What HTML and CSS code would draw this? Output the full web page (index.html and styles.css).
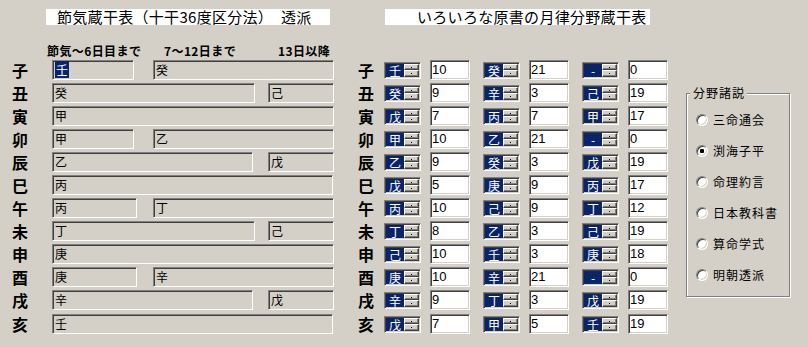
FILE: index.html
```html
<!DOCTYPE html>
<html lang="ja">
<head>
<meta charset="utf-8">
<title>月律分野蔵干表</title>
<link rel="stylesheet" href="styles.css">
</head>
<body>
<div class="app">
  <section class="left">
    <div class="title title-left">節気蔵干表（十干36度区分法）　透派</div>
    <div class="heads">
      <span class="h1">節気～6日目まで</span>
      <span class="h2">7～12日まで</span>
      <span class="h3">13日以降</span>
    </div>
    <div class="rows">
      <div class="row"><span class="br">子</span><div class="fields"><div class="fld w82"><span class="sel">壬</span></div><div class="fld w181">癸</div></div></div>
      <div class="row"><span class="br">丑</span><div class="fields"><div class="fld w203">癸</div><div class="fld w66">己</div></div></div>
      <div class="row"><span class="br">寅</span><div class="fields"><div class="fld w282">甲</div></div></div>
      <div class="row"><span class="br">卯</span><div class="fields"><div class="fld w82">甲</div><div class="fld w181">乙</div></div></div>
      <div class="row"><span class="br">辰</span><div class="fields"><div class="fld w201">乙</div><div class="fld w66">戊</div></div></div>
      <div class="row"><span class="br">巳</span><div class="fields"><div class="fld w281">丙</div></div></div>
      <div class="row"><span class="br">午</span><div class="fields"><div class="fld w85">丙</div><div class="fld w181">丁</div></div></div>
      <div class="row"><span class="br">未</span><div class="fields"><div class="fld w203">丁</div><div class="fld w66">己</div></div></div>
      <div class="row"><span class="br">申</span><div class="fields"><div class="fld w282">庚</div></div></div>
      <div class="row"><span class="br">酉</span><div class="fields"><div class="fld w85">庚</div><div class="fld w181">辛</div></div></div>
      <div class="row"><span class="br">戌</span><div class="fields"><div class="fld w201">辛</div><div class="fld w66">戊</div></div></div>
      <div class="row last"><span class="br">亥</span><div class="fields"><div class="fld w281">壬</div></div></div>
    </div>
  </section>

  <section class="mid">
    <div class="title title-right">いろいろな原書の月律分野蔵干表</div>
    <div class="rows">
      <div class="row"><span class="br">子</span>
        <div class="cell"><div class="spin"><span class="sv">壬</span><span class="btns"><i></i><i></i></span></div><div class="num">10</div></div>
        <div class="cell"><div class="spin"><span class="sv">癸</span><span class="btns"><i></i><i></i></span></div><div class="num">21</div></div>
        <div class="cell"><div class="spin"><span class="sv">-</span><span class="btns"><i></i><i></i></span></div><div class="num">0</div></div>
      </div>
      <div class="row"><span class="br">丑</span>
        <div class="cell"><div class="spin"><span class="sv">癸</span><span class="btns"><i></i><i></i></span></div><div class="num">9</div></div>
        <div class="cell"><div class="spin"><span class="sv">辛</span><span class="btns"><i></i><i></i></span></div><div class="num">3</div></div>
        <div class="cell"><div class="spin"><span class="sv">己</span><span class="btns"><i></i><i></i></span></div><div class="num">19</div></div>
      </div>
      <div class="row"><span class="br">寅</span>
        <div class="cell"><div class="spin"><span class="sv">戊</span><span class="btns"><i></i><i></i></span></div><div class="num">7</div></div>
        <div class="cell"><div class="spin"><span class="sv">丙</span><span class="btns"><i></i><i></i></span></div><div class="num">7</div></div>
        <div class="cell"><div class="spin"><span class="sv">甲</span><span class="btns"><i></i><i></i></span></div><div class="num">17</div></div>
      </div>
      <div class="row"><span class="br">卯</span>
        <div class="cell"><div class="spin"><span class="sv">甲</span><span class="btns"><i></i><i></i></span></div><div class="num">10</div></div>
        <div class="cell"><div class="spin"><span class="sv">乙</span><span class="btns"><i></i><i></i></span></div><div class="num">21</div></div>
        <div class="cell"><div class="spin"><span class="sv">-</span><span class="btns"><i></i><i></i></span></div><div class="num">0</div></div>
      </div>
      <div class="row"><span class="br">辰</span>
        <div class="cell"><div class="spin"><span class="sv">乙</span><span class="btns"><i></i><i></i></span></div><div class="num">9</div></div>
        <div class="cell"><div class="spin"><span class="sv">癸</span><span class="btns"><i></i><i></i></span></div><div class="num">3</div></div>
        <div class="cell"><div class="spin"><span class="sv">戊</span><span class="btns"><i></i><i></i></span></div><div class="num">19</div></div>
      </div>
      <div class="row"><span class="br">巳</span>
        <div class="cell"><div class="spin"><span class="sv">戊</span><span class="btns"><i></i><i></i></span></div><div class="num">5</div></div>
        <div class="cell"><div class="spin"><span class="sv">庚</span><span class="btns"><i></i><i></i></span></div><div class="num">9</div></div>
        <div class="cell"><div class="spin"><span class="sv">丙</span><span class="btns"><i></i><i></i></span></div><div class="num">17</div></div>
      </div>
      <div class="row"><span class="br">午</span>
        <div class="cell"><div class="spin"><span class="sv">丙</span><span class="btns"><i></i><i></i></span></div><div class="num">10</div></div>
        <div class="cell"><div class="spin"><span class="sv">己</span><span class="btns"><i></i><i></i></span></div><div class="num">9</div></div>
        <div class="cell"><div class="spin"><span class="sv">丁</span><span class="btns"><i></i><i></i></span></div><div class="num">12</div></div>
      </div>
      <div class="row"><span class="br">未</span>
        <div class="cell"><div class="spin"><span class="sv">丁</span><span class="btns"><i></i><i></i></span></div><div class="num">8</div></div>
        <div class="cell"><div class="spin"><span class="sv">乙</span><span class="btns"><i></i><i></i></span></div><div class="num">3</div></div>
        <div class="cell"><div class="spin"><span class="sv">己</span><span class="btns"><i></i><i></i></span></div><div class="num">19</div></div>
      </div>
      <div class="row"><span class="br">申</span>
        <div class="cell"><div class="spin"><span class="sv">己</span><span class="btns"><i></i><i></i></span></div><div class="num">10</div></div>
        <div class="cell"><div class="spin"><span class="sv">壬</span><span class="btns"><i></i><i></i></span></div><div class="num">3</div></div>
        <div class="cell"><div class="spin"><span class="sv">庚</span><span class="btns"><i></i><i></i></span></div><div class="num">18</div></div>
      </div>
      <div class="row"><span class="br">酉</span>
        <div class="cell"><div class="spin"><span class="sv">庚</span><span class="btns"><i></i><i></i></span></div><div class="num">10</div></div>
        <div class="cell"><div class="spin"><span class="sv">辛</span><span class="btns"><i></i><i></i></span></div><div class="num">21</div></div>
        <div class="cell"><div class="spin"><span class="sv">-</span><span class="btns"><i></i><i></i></span></div><div class="num">0</div></div>
      </div>
      <div class="row"><span class="br">戌</span>
        <div class="cell"><div class="spin"><span class="sv">辛</span><span class="btns"><i></i><i></i></span></div><div class="num">9</div></div>
        <div class="cell"><div class="spin"><span class="sv">丁</span><span class="btns"><i></i><i></i></span></div><div class="num">3</div></div>
        <div class="cell"><div class="spin"><span class="sv">戊</span><span class="btns"><i></i><i></i></span></div><div class="num">19</div></div>
      </div>
      <div class="row last"><span class="br">亥</span>
        <div class="cell"><div class="spin"><span class="sv">戊</span><span class="btns"><i></i><i></i></span></div><div class="num">7</div></div>
        <div class="cell"><div class="spin"><span class="sv">甲</span><span class="btns"><i></i><i></i></span></div><div class="num">5</div></div>
        <div class="cell"><div class="spin"><span class="sv">壬</span><span class="btns"><i></i><i></i></span></div><div class="num">19</div></div>
      </div>
    </div>
  </section>

  <fieldset class="group">
    <legend>分野諸説</legend>
    <label class="opt"><input type="radio" name="school"><span>三命通会</span></label>
    <label class="opt"><input type="radio" name="school" checked><span>渕海子平</span></label>
    <label class="opt"><input type="radio" name="school"><span>命理約言</span></label>
    <label class="opt"><input type="radio" name="school"><span>日本教科書</span></label>
    <label class="opt"><input type="radio" name="school"><span>算命学式</span></label>
    <label class="opt"><input type="radio" name="school"><span>明朝透派</span></label>
  </fieldset>
</div>
</body>
</html>
```

FILE: styles.css
```css
html, body {
  margin: 0;
  padding: 0;
  background: #D4D0C8;
}

body {
  font-family: "Noto Sans CJK JP", "Noto Sans", sans-serif;
  font-size: 12px;
  color: #000;
}

.app {
  display: flex;
  align-items: flex-start;
  width: 808px;
  height: 347px;
  overflow: hidden;
}

/* titles */
.title {
  height: 16px;
  line-height: 16px;
  background: #fff;
  white-space: nowrap;
  box-sizing: border-box;
}

.title-left {
  margin-left: 34px;
  width: 284px;
  padding-left: 11px;
  font-size: 15px;
  letter-spacing: 0.3px;
}

.title-right {
  margin-left: 27px;
  width: 265px;
  padding-left: 32px;
  font-size: 15px;
  letter-spacing: 0.3px;
}

/* left section */
.left {
  width: 350px;
  flex: none;
  box-sizing: border-box;
  padding: 9px 0 0 12px;
}

.heads {
  display: flex;
  margin-top: 19px;
  height: 14px;
  line-height: 14px;
  padding-left: 35px;
  font-weight: bold;
  font-size: 12px;
  letter-spacing: 0.4px;
  white-space: nowrap;
}

.heads .h1 { width: 117px; }
.heads .h2 { width: 114px; }

.rows {
  display: flex;
  flex-direction: column;
  gap: 3px;
  margin-top: 2px;
}

.row {
  display: flex;
  align-items: center;
  height: 20px;
}

.row.last {
  margin-top: 1px;
}

.br {
  width: 40px;
  flex: none;
  font-size: 16px;
  font-weight: bold;
  line-height: 20px;
}

.fields {
  display: flex;
  justify-content: space-between;
  width: 282px;
}

.fld {
  height: 20px;
  box-sizing: border-box;
  border: 1px solid;
  border-color: #808080 #fff #fff #808080;
  box-shadow: inset 1px 1px #404040, inset -1px -1px #D4D0C8;
  padding: 1px 0 0 2px;
  line-height: 16px;
  font-size: 12px;
  white-space: nowrap;
}

.sel {
  background: #0A246A;
  color: #fff;
  padding: 0 1px;
}

.w66 { width: 66px; }
.w82 { width: 82px; }
.w85 { width: 85px; }
.w181 { width: 181px; }
.w201 { width: 201px; }
.w203 { width: 203px; }
.w281 { width: 281px; }
.w282 { width: 282px; }

/* middle section */
.mid {
  width: 336px;
  flex: none;
  box-sizing: border-box;
  padding: 9px 0 0 8px;
}

.mid .rows {
  margin-top: 35px;
}

.mid .br {
  width: 26px;
}

.cell {
  display: flex;
  align-items: center;
  gap: 9px;
  margin-right: 13px;
}

.spin {
  width: 37px;
  height: 17px;
  box-sizing: border-box;
  border: 1px solid;
  border-color: #808080 #fff #fff #808080;
  box-shadow: inset 1px 1px #404040, inset -1px -1px #D4D0C8;
  padding: 1px;
  display: flex;
}

.sv {
  width: 18px;
  flex: none;
  background: #0A246A;
  color: #fff;
  font-size: 12px;
  line-height: 13px;
  text-align: center;
}

.btns {
  flex: 1;
  display: flex;
  flex-direction: column;
}

.btns i {
  flex: 1;
  position: relative;
  background: #D4D0C8;
  box-sizing: border-box;
  border: 1px solid;
  border-color: #fff #404040 #404040 #fff;
  box-shadow: inset -1px -1px #808080;
}

.btns i::after {
  content: "";
  position: absolute;
  left: 6px;
  top: 2px;
  width: 1px;
  height: 1px;
  background: #000;
}

.num {
  width: 40px;
  height: 20px;
  box-sizing: border-box;
  border: 1px solid;
  border-color: #808080 #fff #fff #808080;
  box-shadow: inset 1px 1px #404040, inset -1px -1px #D4D0C8;
  background: #fff;
  padding: 1px 0 0 1px;
  font-family: "Liberation Sans", Arial, sans-serif;
  font-size: 13px;
  line-height: 16px;
}

/* group box */
.group {
  width: 104px;
  height: 211px;
  box-sizing: border-box;
  margin: 86px 0 0 0;
  padding: 4px 0 0 9px;
  border: 1px solid #808080;
  box-shadow: inset 1px 1px #fff, 1px 1px #fff;
  min-width: 0;
}

.group legend {
  margin-left: -6px;
  padding: 0 2px 0 3px;
  line-height: 14px;
  font-size: 12px;
  font-weight: normal;
  letter-spacing: 1px;
  background: #D4D0C8;
}

.opt {
  display: flex;
  align-items: center;
  gap: 5px;
  height: 31px;
  font-size: 12px;
  letter-spacing: 1px;
  white-space: nowrap;
}

.opt input {
  appearance: none;
  -webkit-appearance: none;
  width: 12px;
  height: 12px;
  margin: 0;
  flex: none;
  border-radius: 50%;
  background: #fff;
  box-sizing: border-box;
  border: 1px solid;
  border-color: #808080 #fff #fff #808080;
  box-shadow: inset 1px 1px #404040, inset -1px -1px #D4D0C8;
}

.opt input:checked {
  background: radial-gradient(circle, #000 0 2px, #fff 2.5px);
}
```
